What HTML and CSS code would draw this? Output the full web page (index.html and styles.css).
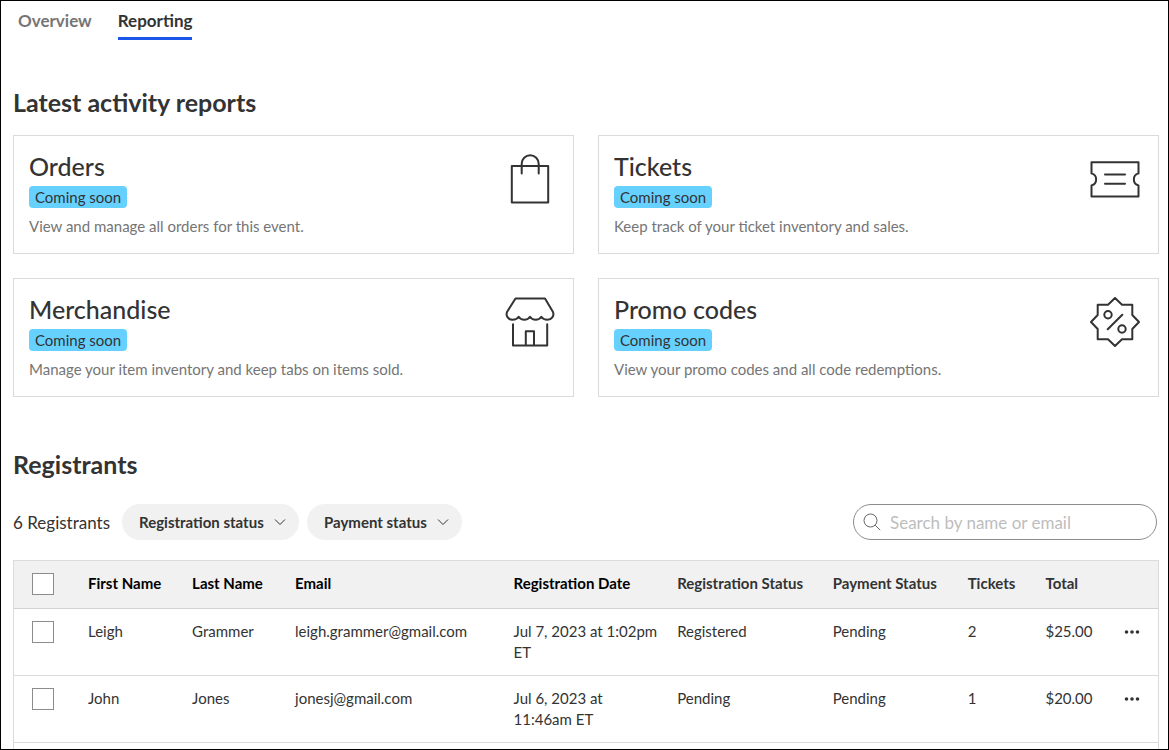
FILE: index.html
```html
<!DOCTYPE html>
<html lang="en">
<head>
<meta charset="utf-8">
<title>Reporting</title>
<link rel="stylesheet" href="styles.css">
</head>
<body>
<div class="page">
  <nav class="tabs">
    <a class="tab" href="#overview">Overview</a>
    <a class="tab tab-active" href="#reporting" aria-current="page">Reporting</a>
  </nav>
  <main>
    <h2 class="section-title">Latest activity reports</h2>
    <div class="cards">
      <article class="card">
        <div class="card-body">
          <h3 class="card-title">Orders</h3>
          <span class="badge">Coming soon</span>
          <p class="card-text">View and manage all orders for this event.</p>
        </div>
        <svg class="card-icon" viewBox="0 0 50 50" aria-hidden="true"><path d="M6.8 12h36.4v36.5H6.8zM16.7 19.5V9.7a8.5 8.5 0 0 1 17 0v9.8"/></svg>
      </article>
      <article class="card">
        <div class="card-body">
          <h3 class="card-title">Tickets</h3>
          <span class="badge">Coming soon</span>
          <p class="card-text">Keep track of your ticket inventory and sales.</p>
        </div>
        <svg class="card-icon" viewBox="0 0 50 50" aria-hidden="true"><path d="M1.5 8.2h47v11.2a6.2 6.2 0 0 0 0 12v11.2h-47V31.4a6.2 6.2 0 0 0 0-12zM15 20.6h20M15 29.8h20"/></svg>
      </article>
      <article class="card">
        <div class="card-body">
          <h3 class="card-title">Merchandise</h3>
          <span class="badge">Coming soon</span>
          <p class="card-text">Manage your item inventory and keep tabs on items sold.</p>
        </div>
        <svg class="card-icon" viewBox="0 0 50 50" aria-hidden="true"><path d="M10.5 1.500h29.500l8 13.500c1.500 4-1.500 7.800-5.500 7.800-3 0-5-1-6.200-3-1.200 2-3 3-5.600 3s-4.500-1-5.700-3c-1.200 2-3.100 3-5.700 3s-4.400-1-5.600-3c-1.200 2-3.200 3-6.200 3-4 0-7-3.800-5.500-7.800zM8 27.300v21.200h34.200V27.300M20.800 48.500V34.200H29v14.300"/></svg>
      </article>
      <article class="card">
        <div class="card-body">
          <h3 class="card-title">Promo codes</h3>
          <span class="badge">Coming soon</span>
          <p class="card-text">View your promo codes and all code redemptions.</p>
        </div>
        <svg class="card-icon" viewBox="0 0 50 50" aria-hidden="true"><path d="M7.700 7.700H18l7-6.700 7 6.700h10.300V18l6.700 7-6.700 7v10.300H32L25 49l-7-6.700H7.700V32L1 25l6.700-7zM17.700 32.300l14.600-14.600"/><circle cx="18" cy="17.800" r="3.700"/><circle cx="32" cy="32" r="3.700"/></svg>
      </article>
    </div>

    <h2 class="section-title">Registrants</h2>
    <div class="toolbar">
      <span class="count">6 Registrants</span>
      <div class="filter">
        <select class="filter-select" aria-label="Registration status"><option>Registration status</option></select>
        <svg class="chevron" viewBox="0 0 12 12" aria-hidden="true"><path d="M1 3.500l5 5 5-5"/></svg>
      </div>
      <div class="filter">
        <select class="filter-select" aria-label="Payment status"><option>Payment status</option></select>
        <svg class="chevron" viewBox="0 0 12 12" aria-hidden="true"><path d="M1 3.500l5 5 5-5"/></svg>
      </div>
      <label class="search">
        <svg class="search-icon" viewBox="0 0 18 18" aria-hidden="true"><circle cx="7.500" cy="7.500" r="6.500"/><path d="M12.200 12.200l5 5"/></svg>
        <input class="search-input" type="search" placeholder="Search by name or email" aria-label="Search by name or email">
      </label>
    </div>

    <table class="table">
      <colgroup>
        <col class="c-check"><col class="c-first"><col class="c-last"><col class="c-email"><col class="c-date"><col class="c-reg"><col class="c-pay"><col class="c-tickets"><col class="c-total"><col class="c-more">
      </colgroup>
      <thead>
        <tr>
          <th><input class="check" type="checkbox" aria-label="Select all"></th>
          <th class="strong">First Name</th><th class="strong">Last Name</th><th class="strong">Email</th><th class="strong">Registration Date</th>
          <th>Registration Status</th><th>Payment Status</th><th>Tickets</th><th>Total</th><th></th>
        </tr>
      </thead>
      <tbody>
        <tr>
          <td><input class="check" type="checkbox" aria-label="Select Leigh Grammer"></td>
          <td>Leigh</td><td>Grammer</td><td>leigh.grammer@gmail.com</td><td>Jul 7, 2023 at 1:02pm ET</td>
          <td>Registered</td><td>Pending</td><td>2</td><td>$25.00</td>
          <td><button class="more" type="button" aria-label="More actions"><svg class="dots" viewBox="0 0 16 4" aria-hidden="true"><circle cx="2.500" cy="2" r="1.800"/><circle cx="8" cy="2" r="1.800"/><circle cx="13.500" cy="2" r="1.800"/></svg></button></td>
        </tr>
        <tr>
          <td><input class="check" type="checkbox" aria-label="Select John Jones"></td>
          <td>John</td><td>Jones</td><td>jonesj@gmail.com</td><td>Jul 6, 2023 at 11:46am ET</td>
          <td>Pending</td><td>Pending</td><td>1</td><td>$20.00</td>
          <td><button class="more" type="button" aria-label="More actions"><svg class="dots" viewBox="0 0 16 4" aria-hidden="true"><circle cx="2.500" cy="2" r="1.800"/><circle cx="8" cy="2" r="1.800"/><circle cx="13.500" cy="2" r="1.800"/></svg></button></td>
        </tr>
        <tr><td colspan="10"></td></tr>
      </tbody>
    </table>
  </main>
</div>
</body>
</html>
```
FILE: styles.css
```css
* { box-sizing: border-box; }
body {
  margin: 0;
  font-family: Lato, "Open Sans", sans-serif;
  font-size: 15px;
  line-height: 21px;
  color: #333;
  background: #fff;
}
.page {
  height: 100vh;
  overflow: hidden;
  border: 1px solid #000;
  padding: 0 9px 0 12px;
}
.tabs { display: flex; gap: 26px; padding: 9px 5px 0; }
.tab {
  padding-bottom: 6px;
  border-bottom: 3px solid transparent;
  font-size: 17px;
  font-weight: 700;
  color: #757575;
  text-decoration: none;
}
.tab-active { color: #333; border-color: #1a56ea; }
.section-title { margin: 47px 0 18px; font-size: 25px; line-height: 30px; font-weight: 700; }
.cards { display: grid; grid-template-columns: 1fr 1fr; gap: 24px; }
.card {
  display: flex;
  justify-content: space-between;
  align-items: flex-start;
  padding: 16px 16px 16px 15px;
  border: 1px solid #dbdbdb;
}
.card-body { display: flex; flex-direction: column; align-items: flex-start; }
.card-title { margin: 0 0 6px; font-size: 25px; line-height: 28px; font-weight: 500; }
.badge { padding: 0 6px; border-radius: 4px; background: #66d1ff; line-height: 22px; }
.card-text { margin: 8px 0 0; color: #757575; }
.card-icon { width: 54px; height: 54px; padding: 2px; fill: none; stroke: #333; stroke-width: 2; stroke-linejoin: round; stroke-linecap: round; }
.cards + .section-title { margin: 52px 0 25px; }
.toolbar { display: flex; align-items: center; gap: 8px; padding-right: 2px; margin-bottom: 20px; }
.count { margin-right: 4px; font-size: 17px; }
.filter { display: grid; align-items: center; }
.filter-select, .chevron { grid-area: 1 / 1; }
.filter-select {
  appearance: none;
  height: 36px;
  padding: 0 35px 0 17px;
  border: 0;
  border-radius: 18px;
  background: #f1f1f1;
  color: #333;
  font: inherit;
  font-weight: 700;
}
.chevron { justify-self: end; width: 12px; height: 12px; margin-right: 13px; fill: none; stroke: #333; pointer-events: none; }
.search {
  display: flex;
  align-items: center;
  gap: 9px;
  flex: 0 1 304px;
  height: 36px;
  margin-left: auto;
  padding: 0 9px;
  border: 1px solid #8c8c8c;
  border-radius: 18px;
}
.search-icon { flex: none; width: 18px; height: 18px; fill: none; stroke: #666; }
.search-input { flex: 1; min-width: 0; padding: 0; border: 0; outline: 0; background: none; font: inherit; font-size: 17px; color: #333; }
.search-input::placeholder { color: #bdbdbd; }
.table { width: 100%; table-layout: fixed; border-collapse: separate; border-spacing: 0; border: 1px solid #dbdbdb; border-bottom: 0; }
.table th, .table td { height: 67px; padding: 12px 16px 12px 0; border-bottom: 1px solid #dbdbdb; text-align: left; vertical-align: top; }
.table th { height: 48px; padding-right: 0; background: #f1f1f1; border-color: #d2d2d2; font-weight: 700; white-space: nowrap; }
.table .strong { color: #000; }
.table th:first-child, .table td:first-child { padding-left: 18px; }
.check { display: block; appearance: none; width: 22px; height: 22px; margin: 0; border: 1px solid #8c8c8c; background: #fff; }
.more { display: block; padding: 9px 0 8px; border: 0; background: none; }
.dots { display: block; width: 16px; height: 4px; fill: #333; }
.c-check { width: 74px; }
.c-first { width: 9.1%; }
.c-last { width: 9%; }
.c-email { width: 19.1%; }
.c-date { width: 14.3%; }
.c-reg { width: 13.6%; }
.c-pay { width: 11.8%; }
.c-tickets { width: 6.8%; }
.c-total { width: 6.9%; }
```
